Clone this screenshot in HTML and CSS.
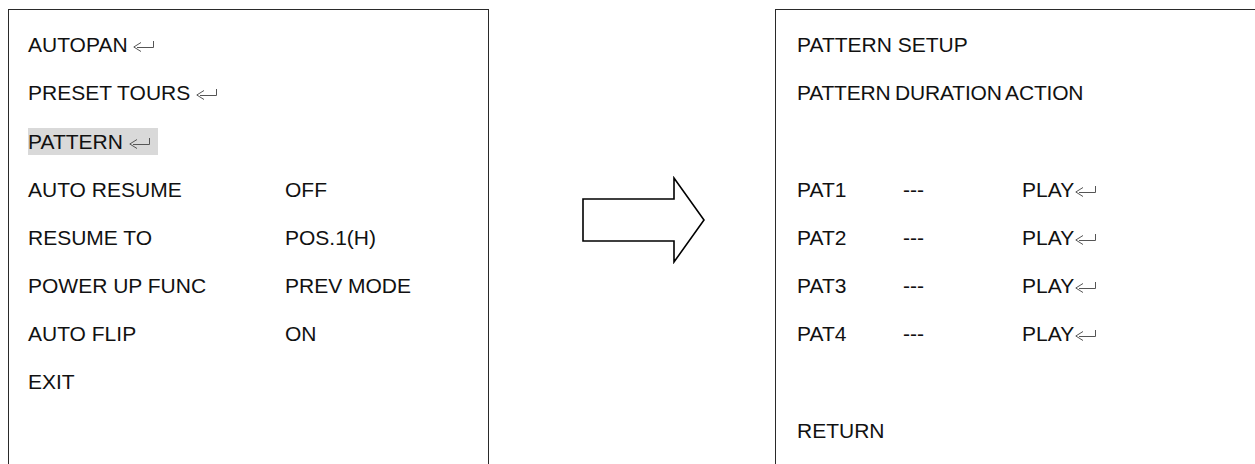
FILE: index.html
```html
<!DOCTYPE html>
<html lang="en">
<head>
    <meta charset="UTF-8">
    <meta name="viewport" content="width=device-width, initial-scale=1.0">
    <title>Pattern Menu</title>
    <link rel="stylesheet" href="styles.css">
</head>
<body>
    <div class="page">
        <!-- Menu principal -->
        <div class="menu menu-main">
            <div class="row"><span>AUTOPAN <svg class="enter" viewBox="0 0 21 12"><path d="M8 2.5 L0.8 7 L8 11.5 M4 7.5 H20.5 V1"/></svg></span></div>
            <div class="row"><span>PRESET TOURS <svg class="enter" viewBox="0 0 21 12"><path d="M8 2.5 L0.8 7 L8 11.5 M4 7.5 H20.5 V1"/></svg></span></div>
            <div class="row"><span class="selected">PATTERN <svg class="enter" viewBox="0 0 21 12"><path d="M8 2.5 L0.8 7 L8 11.5 M4 7.5 H20.5 V1"/></svg></span></div>
            <div class="row"><span>AUTO RESUME</span><span>OFF</span></div>
            <div class="row"><span>RESUME TO</span><span>POS.1(H)</span></div>
            <div class="row"><span>POWER UP FUNC</span><span>PREV MODE</span></div>
            <div class="row"><span>AUTO FLIP</span><span>ON</span></div>
            <div class="row"><span>EXIT</span></div>
        </div>

        <svg class="arrow" viewBox="0 0 125 88">
            <polygon points="2,23 93,23 93,2 123,44 93,86 93,65 2,65"/>
        </svg>

        <!-- Submenu de pattern -->
        <div class="menu menu-pattern">
            <div class="row"><span>PATTERN SETUP</span></div>
            <div class="row"><span class="narrow">PATTERN DURATION ACTION</span></div>
            <div class="row"></div>
            <div class="row"><span>PAT1</span><span>---</span><span>PLAY<svg class="enter tight" viewBox="0 0 21 12"><path d="M8 2.5 L0.8 7 L8 11.5 M4 7.5 H20.5 V1"/></svg></span></div>
            <div class="row"><span>PAT2</span><span>---</span><span>PLAY<svg class="enter tight" viewBox="0 0 21 12"><path d="M8 2.5 L0.8 7 L8 11.5 M4 7.5 H20.5 V1"/></svg></span></div>
            <div class="row"><span>PAT3</span><span>---</span><span>PLAY<svg class="enter tight" viewBox="0 0 21 12"><path d="M8 2.5 L0.8 7 L8 11.5 M4 7.5 H20.5 V1"/></svg></span></div>
            <div class="row"><span>PAT4</span><span>---</span><span>PLAY<svg class="enter tight" viewBox="0 0 21 12"><path d="M8 2.5 L0.8 7 L8 11.5 M4 7.5 H20.5 V1"/></svg></span></div>
            <div class="row"></div>
            <div class="row"><span>RETURN</span></div>
        </div>
    </div>
</body>
</html>
```

FILE: styles.css
```css
body {
    margin: 0;
    background-color: #fff;
    font-family: "Liberation Sans", Arial, sans-serif;
    color: #111;
    overflow: hidden;
}

.page {
    display: flex;
    align-items: flex-start;
    padding: 9px 0 0 8px;
}

.menu {
    box-sizing: border-box;
    height: 480px;
    border: 1px solid #2a2a2a;
    padding-top: 11px;
    font-size: 21px;
    flex-shrink: 0;
}

.menu-main {
    width: 481px;
    padding-left: 19px;
}

.menu-pattern {
    width: 500px;
    margin-left: 69px;
    padding-left: 21px;
}

.row {
    display: grid;
    height: 48.2px;
    line-height: 48.2px;
    white-space: nowrap;
}

.menu-main .row {
    grid-template-columns: 257px auto;
}

.menu-pattern .row {
    grid-template-columns: 106px 119px auto;
}

.row span {
    justify-self: start;
}

.narrow {
    letter-spacing: -0.2px;
    word-spacing: -1px;
}

.selected {
    background-color: #d9d9d9;
    padding: 2px 8px 1px 0;
    line-height: normal;
    align-self: center;
}

.enter {
    width: 21px;
    height: 12px;
    vertical-align: 0;
    fill: none;
    stroke: #555;
    stroke-width: 1;
}

.enter.tight {
    margin-left: 1px;
}

.arrow {
    width: 125px;
    height: 88px;
    margin-left: 92px;
    margin-top: 167px;
    flex-shrink: 0;
    fill: #fff;
    stroke: #000;
    stroke-width: 1.6;
}
```
